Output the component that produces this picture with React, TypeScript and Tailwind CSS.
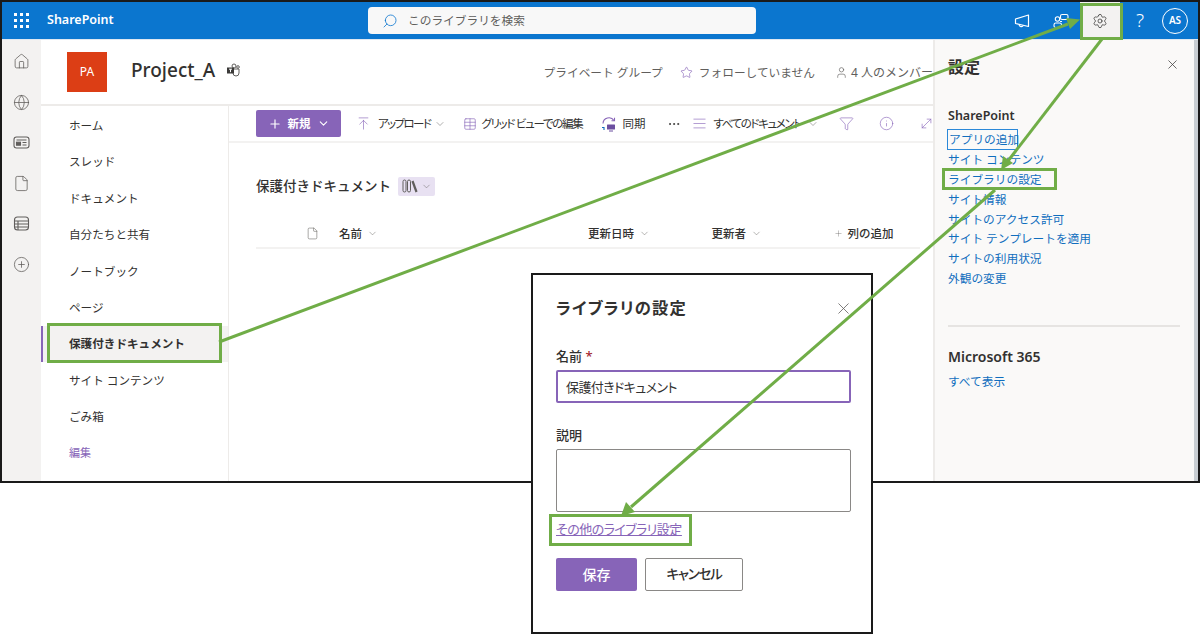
import { Home, Globe, File, Search, Settings, X, Star, User, ArrowUpToLine, Table, Filter, Info, MoveDiagonal, ChevronDown, Plus, CirclePlus, Ellipsis, AlignJustify } from "lucide-react";

const FONT = "font-['Noto_Sans','Noto_Sans_CJK_JP',sans-serif]";

const navItems = ["ホーム", "スレッド", "ドキュメント", "自分たちと共有", "ノートブック", "ページ"];
const navItems2 = ["サイト コンテンツ", "ごみ箱"];
const panelLinks = ["サイト コンテンツ", "ライブラリの設定", "サイト情報", "サイトのアクセス許可", "サイト テンプレートを適用", "サイトの利用状況", "外観の変更"];

function NewsIcon() {
  return (
    <svg width="17" height="17" viewBox="0 0 17 17" fill="none" stroke="#605e5c" strokeWidth="1.1">
      <rect x="1" y="3" width="15" height="11" rx="2.5" />
      <path d="M3.5 6h10M9.5 8.5h4M9.5 11h4" />
      <rect x="3.5" y="8.2" width="4" height="3" fill="#605e5c" />
    </svg>
  );
}

function ListIcon() {
  return (
    <svg width="17" height="17" viewBox="0 0 17 17" fill="none" stroke="#605e5c" strokeWidth="1.1">
      <rect x="1.5" y="2" width="14" height="13" rx="3" />
      <path d="M1.5 6h14M1.5 9h14M1.5 12h14M5 6v9" />
    </svg>
  );
}

function TeamsIcon() {
  return (
    <svg width="14" height="14" viewBox="0 0 14 14" fill="none">
      <circle cx="8" cy="3" r="2" stroke="#605e5c" />
      <circle cx="12" cy="4" r="1.3" stroke="#605e5c" />
      <path d="M6 6h7v4a3 3 0 0 1-6 0" stroke="#605e5c" />
      <rect x="1" y="4.5" width="7" height="6" fill="#3b3a39" />
      <path d="M3 6.2h3M4.5 6.2v3" stroke="#fff" />
    </svg>
  );
}

function SyncIcon() {
  return (
    <svg width="16" height="16" viewBox="0 0 16 16" fill="none">
      <path d="M2 7.5a6 6 0 0 1 11-3" stroke="#8764b8" strokeWidth="1.1" />
      <path d="M13.5 1.8v3h-3" stroke="#8764b8" strokeWidth="1.1" />
      <path d="M1 11.5h2v2.5" stroke="#0f6cbd" strokeWidth="1.1" />
      <rect x="6" y="8.5" width="8" height="5" rx="0.5" fill="#6b4ea0" />
      <path d="M8 15h4" stroke="#6b4ea0" />
    </svg>
  );
}

function LibraryIcon() {
  return (
    <svg width="17" height="14" viewBox="0 0 17 14" fill="none" stroke="#605e5c" strokeWidth="1">
      <rect x="1" y="1" width="3" height="12" rx="1.5" />
      <rect x="5.5" y="1" width="3" height="12" rx="1.5" />
      <path d="M10.5 2 14.5 13" strokeWidth="2.2" />
    </svg>
  );
}

function ShareGroupIcon() {
  return (
    <svg width="16" height="16" viewBox="0 0 16 16" fill="none" stroke="#fff" strokeWidth="1.1">
      <rect x="7.5" y="1.5" width="7.5" height="5" rx="1.6" />
      <circle cx="4.5" cy="6" r="2.2" />
      <rect x="1" y="10" width="7.5" height="4.5" rx="1.8" />
      <path d="M7 8.5h2" />
    </svg>
  );
}

function MegaphoneIcon() {
  return (
    <svg width="16" height="16" viewBox="0 0 16 16" fill="none" stroke="#fff" strokeWidth="1.2" strokeLinejoin="round">
      <path d="M1.5 6 14.5 2v11.5L1.5 10.5Z" />
      <path d="M5 11.5a2.4 2.4 0 0 0 4.4 1" />
    </svg>
  );
}

function Annotations() {
  const green = "#70ad47";
  return (
    <svg className="absolute left-0 top-0 pointer-events-none" width="1200" height="634" viewBox="0 0 1200 634" fill="none">
      <line x1="219" y1="342" x2="1068" y2="24" stroke={green} strokeWidth="3" />
      <polygon points="1080,19.5 1066,18 1070,29" fill={green} />
      <line x1="1102" y1="39" x2="1008" y2="161" stroke={green} strokeWidth="3" />
      <polygon points="1001,170 1003,156 1013,163" fill={green} />
      <line x1="995" y1="190" x2="631" y2="507" stroke={green} strokeWidth="3" />
      <polygon points="621,516 626,502 635,512" fill={green} />
    </svg>
  );
}

function Dialog() {
  return (
    <div className="absolute left-[531px] top-[273px] w-[342px] h-[361px] bg-white border-2 border-[#1a1a1a] pl-[23px] pr-[19px] pt-[19px]">
      <div className="flex items-center justify-between h-[28px]">
        <span className="text-[16.3px] font-semibold text-[#323130] [font-feature-settings:'palt'] tracking-[1.1px]">ライブラリの設定</span>
        <X size={19} strokeWidth={1} className="text-[#605e5c] -mr-[1px]" />
      </div>
      <div className="mt-[24px] h-[20px] text-[13px] font-medium text-[#323130] leading-[20px]">
        名前 <span className="text-[#a4262c]">*</span>
      </div>
      <div className="mt-[4px] w-[295px] h-[33px] border-2 border-[#8764b8] rounded-[2px] px-[8px] pt-[2px] flex items-center text-[13px] text-[#323130] [font-feature-settings:'palt'] tracking-[-0.6px]">
        保護付きドキュメント
      </div>
      <div className="mt-[22px] h-[20px] text-[13px] font-medium text-[#323130] leading-[20px]">説明</div>
      <div className="mt-[4px] w-[295px] h-[63px] border border-[#8a8886] rounded-[2px]" />
      <div className="mt-[7px] h-[20px] leading-[20px] text-[13px] text-[#8764b8] underline [font-feature-settings:'palt'] tracking-[-0.55px]">その他のライブラリ設定</div>
      <div className="mt-[19px] flex gap-[8px]">
        <div className="w-[81px] h-[33px] bg-[#8764b8] rounded-[2px] flex items-center justify-center text-[14px] font-medium text-white">保存</div>
        <div className="w-[98px] h-[33px] bg-white border border-[#8a8886] rounded-[2px] flex items-center justify-center text-[13.5px] font-medium text-[#323130] [font-feature-settings:'palt'] tracking-[-1.2px]">キャンセル</div>
      </div>
    </div>
  );
}

export default function App() {
  return (
    <div className={`relative w-[1200px] h-[634px] bg-white overflow-hidden ${FONT}`}>
      <div className="w-[1200px] h-[483px] border-2 border-[#1a1a1a] flex flex-col overflow-hidden">
        {/* suite bar */}
        <div className="h-[37px] shrink-0 bg-[#0b76cf] flex items-center text-white relative">
          <div className="w-[45px] pl-[12px] shrink-0">
            <div className="grid grid-cols-3 gap-[3px] w-[15px]">
              {Array.from({ length: 9 }).map((_, i) => (
                <span key={i} className="w-[3px] h-[3px] bg-white" />
              ))}
            </div>
          </div>
          <span className="text-[12.5px] font-semibold w-[321px]">SharePoint</span>
          <div className="w-[388px] h-[27px] bg-[#f8f8f8] rounded-[4px] flex items-center pl-[14px] text-[#605e5c]">
            <Search size={16} strokeWidth={1.2} className="text-[#0b76cf] -scale-x-100" />
            <span className="ml-[10px] text-[11.7px]">このライブラリを検索</span>
          </div>
          <div className="ml-auto flex items-center h-[37px]">
            <div className="w-[40px] flex justify-center"><MegaphoneIcon /></div>
            <div className="w-[38px] flex justify-center"><ShareGroupIcon /></div>
            <div className="w-[40px] h-[37px] flex items-center justify-center bg-[#f3f2f1] text-[#323130]"><Settings size={16} strokeWidth={1.1} /></div>
            <div className="w-[40px] flex justify-center text-[19px] font-light">?</div>
            <div className="ml-[2px] w-[26px] h-[26px] rounded-full border border-white flex items-center justify-center text-[10px] font-semibold mr-[10px]">AS</div>
          </div>
        </div>

        <div className="flex flex-1 min-h-0 border-t border-[#dfe8f2]">
          {/* app rail */}
          <div className="w-[39px] shrink-0 bg-[#f3f2f1] flex flex-col items-center pt-[13px] gap-[23.6px] text-[#605e5c]">
            <Home size={17} strokeWidth={1.1} />
            <Globe size={17} strokeWidth={1.1} />
            <NewsIcon />
            <File size={17} strokeWidth={1.1} />
            <ListIcon />
            <CirclePlus size={17} strokeWidth={1.1} />
          </div>

          {/* site */}
          <div className="w-[892px] shrink-0 flex flex-col bg-white min-w-0">
            <div className="h-[66px] shrink-0 border-b-2 border-[#edebe9] flex items-center pl-[26px]">
              <div className="w-[40px] h-[40px] bg-[#dc3e15] flex items-center justify-center text-white text-[12px]">PA</div>
              <span className="ml-[24px] text-[19px] font-medium text-[#323130] -mt-[4px]">Project_A</span>
              <span className="ml-[11px] -mt-[4px]"><TeamsIcon /></span>
              <div className="ml-auto flex items-center text-[11.7px] text-[#605e5c] whitespace-nowrap mt-[1px]">
                <span>プライベート グループ</span>
                <Star size={13} strokeWidth={1.2} className="ml-[17px] text-[#8764b8]" />
                <span className="ml-[6px]">フォローしていません</span>
                <User size={13} strokeWidth={1.2} className="ml-[20px]" />
                <span className="ml-[3px] text-[12px]">4 人のメンバー</span>
              </div>
            </div>

            <div className="flex flex-1 min-h-0">
              {/* left nav */}
              <div className="w-[188px] shrink-0 border-r border-[#edebe9] text-[11.6px] text-[#323130] pt-[1.5px]">
                {navItems.map((t) => (
                  <div key={t} className="h-[36.4px] flex items-center pl-[28px]">{t}</div>
                ))}
                <div className="h-[36.4px] flex items-center pl-[26px] bg-[#f3f2f1] border-l-2 border-[#8764b8] font-bold">保護付きドキュメント</div>
                {navItems2.map((t) => (
                  <div key={t} className="h-[36.4px] flex items-center pl-[28px]">{t}</div>
                ))}
                <div className="h-[36.4px] flex items-center pl-[28px] text-[11px] text-[#8764b8]">編集</div>
              </div>

              {/* content */}
              <div className="flex-1 min-w-0 flex flex-col">
                <div className="h-[37px] shrink-0 border-b-2 border-[#f3f2f1] flex items-center pl-[27px] text-[11.5px] text-[#323130] whitespace-nowrap overflow-hidden [font-feature-settings:'palt'] [&>*]:shrink-0">
                  <div className="w-[85px] h-[27px] bg-[#8764b8] rounded-[2px] flex items-center justify-center text-white font-semibold gap-[6px]">
                    <Plus size={14} strokeWidth={2} />
                    <span>新規</span>
                    <ChevronDown size={13} strokeWidth={2} />
                  </div>
                  <ArrowUpToLine size={15} strokeWidth={1} className="ml-[15px] text-[#8764b8]" />
                  <span className="ml-[7px] tracking-[-1.6px]">アップロード</span>
                  <ChevronDown size={12} strokeWidth={1} className="ml-[4px] text-[#605e5c]" />
                  <Table size={14} strokeWidth={1.1} className="ml-[17px] text-[#8764b8]" />
                  <span className="ml-[4px] tracking-[-1.3px]">グリッド ビューでの編集</span>
                  <span className="ml-[19px]"><SyncIcon /></span>
                  <span className="ml-[5px]">同期</span>
                  <Ellipsis size={14} strokeWidth={1.5} className="ml-[22px]" />
                  <AlignJustify size={15} strokeWidth={1} className="ml-[10.5px] text-[#8764b8]" />
                  <span className="ml-[6.5px] tracking-[-1.4px]">すべてのドキュメント</span>
                  <ChevronDown size={12} strokeWidth={1} className="ml-[6px] text-[#605e5c]" />
                  <Filter size={15} strokeWidth={1} className="ml-[20px] text-[#8764b8]" />
                  <Info size={15} strokeWidth={1} className="ml-[25px] text-[#8764b8]" />
                  <MoveDiagonal size={15} strokeWidth={1} className="ml-[25px] text-[#8764b8]" />
                </div>

                <div className="flex items-center pl-[27px] mt-[33px] h-[20px]">
                  <span className="text-[13.5px] font-medium text-[#323130]">保護付きドキュメント</span>
                  <div className="ml-[7px] w-[37px] h-[19px] bg-[#e8e1f2] rounded-[2px] flex items-center justify-center gap-[2px]">
                    <LibraryIcon />
                    <ChevronDown size={11} strokeWidth={1} className="text-[#605e5c]" />
                  </div>
                </div>

                <div className="ml-[27px] mt-[24px] h-[29px] w-[664px] border-b-2 border-[#f3f2f1] flex items-center text-[11.5px] text-[#323130] font-medium whitespace-nowrap [&>*]:shrink-0">
                  <File size={13} strokeWidth={1} className="ml-[50px] text-[#605e5c]" />
                  <span className="ml-[20px]">名前</span>
                  <ChevronDown size={11} strokeWidth={1} className="ml-[5px] text-[#605e5c]" />
                  <span className="ml-[210px]">更新日時</span>
                  <ChevronDown size={11} strokeWidth={1} className="ml-[4.5px] text-[#605e5c]" />
                  <span className="ml-[62px]">更新者</span>
                  <ChevronDown size={11} strokeWidth={1} className="ml-[5px] text-[#605e5c]" />
                  <Plus size={9} strokeWidth={1} className="ml-[72px] text-[#605e5c]" />
                  <span className="ml-[4.5px]">列の追加</span>
                </div>
              </div>
            </div>
          </div>

          {/* settings panel */}
          <div className="w-[261px] shrink-0 bg-[#faf9f8] border-l-2 border-[#edebe9] pl-[13px] pr-[14px] pt-[15px]">
            <div className="flex items-center justify-between h-[24px]">
              <span className="text-[16px] font-bold text-[#323130]">設定</span>
              <X size={15} strokeWidth={1.2} className="text-[#3b3a39] -mt-[5px]" />
            </div>
            <div className="mt-[27px] h-[20px] leading-[20px] text-[12.5px] font-semibold text-[#323130]">SharePoint</div>
            <div className="mt-[3px] text-[11.7px] text-[#106ebe] leading-[19.85px] whitespace-nowrap">
              <div className="-ml-[1px] pl-[1px] w-[71px] h-[21px] border border-[#2b88d8]">アプリの追加</div>
              {panelLinks.map((t) => (
                <div key={t} className="h-[19.85px]">{t}</div>
              ))}
            </div>
            <div className="mt-[36px] h-[2px] w-[232px] bg-[#e6e4e2]" />
            <div className="mt-[20px] h-[20px] leading-[20px] text-[14px] font-semibold text-[#323130]">Microsoft 365</div>
            <div className="mt-[4px] text-[11.7px] text-[#106ebe] leading-[20px]">すべて表示</div>
          </div>
          <div className="w-[4px] shrink-0 bg-[#c8ced3]" />
        </div>
      </div>

      <Dialog />
      <Annotations />

      {/* annotation highlight boxes */}
      <div className="absolute left-[1080px] top-[3px] w-[43px] h-[37px] border-[3px] border-[#70ad47]" />
      <div className="absolute left-[942px] top-[168px] w-[115px] h-[22px] border-[3px] border-[#70ad47]" />
      <div className="absolute left-[47px] top-[323px] w-[175px] h-[40px] border-[3px] border-[#70ad47]" />
      <div className="absolute left-[549px] top-[514px] w-[143px] h-[32px] border-[3px] border-[#70ad47]" />
    </div>
  );
}
